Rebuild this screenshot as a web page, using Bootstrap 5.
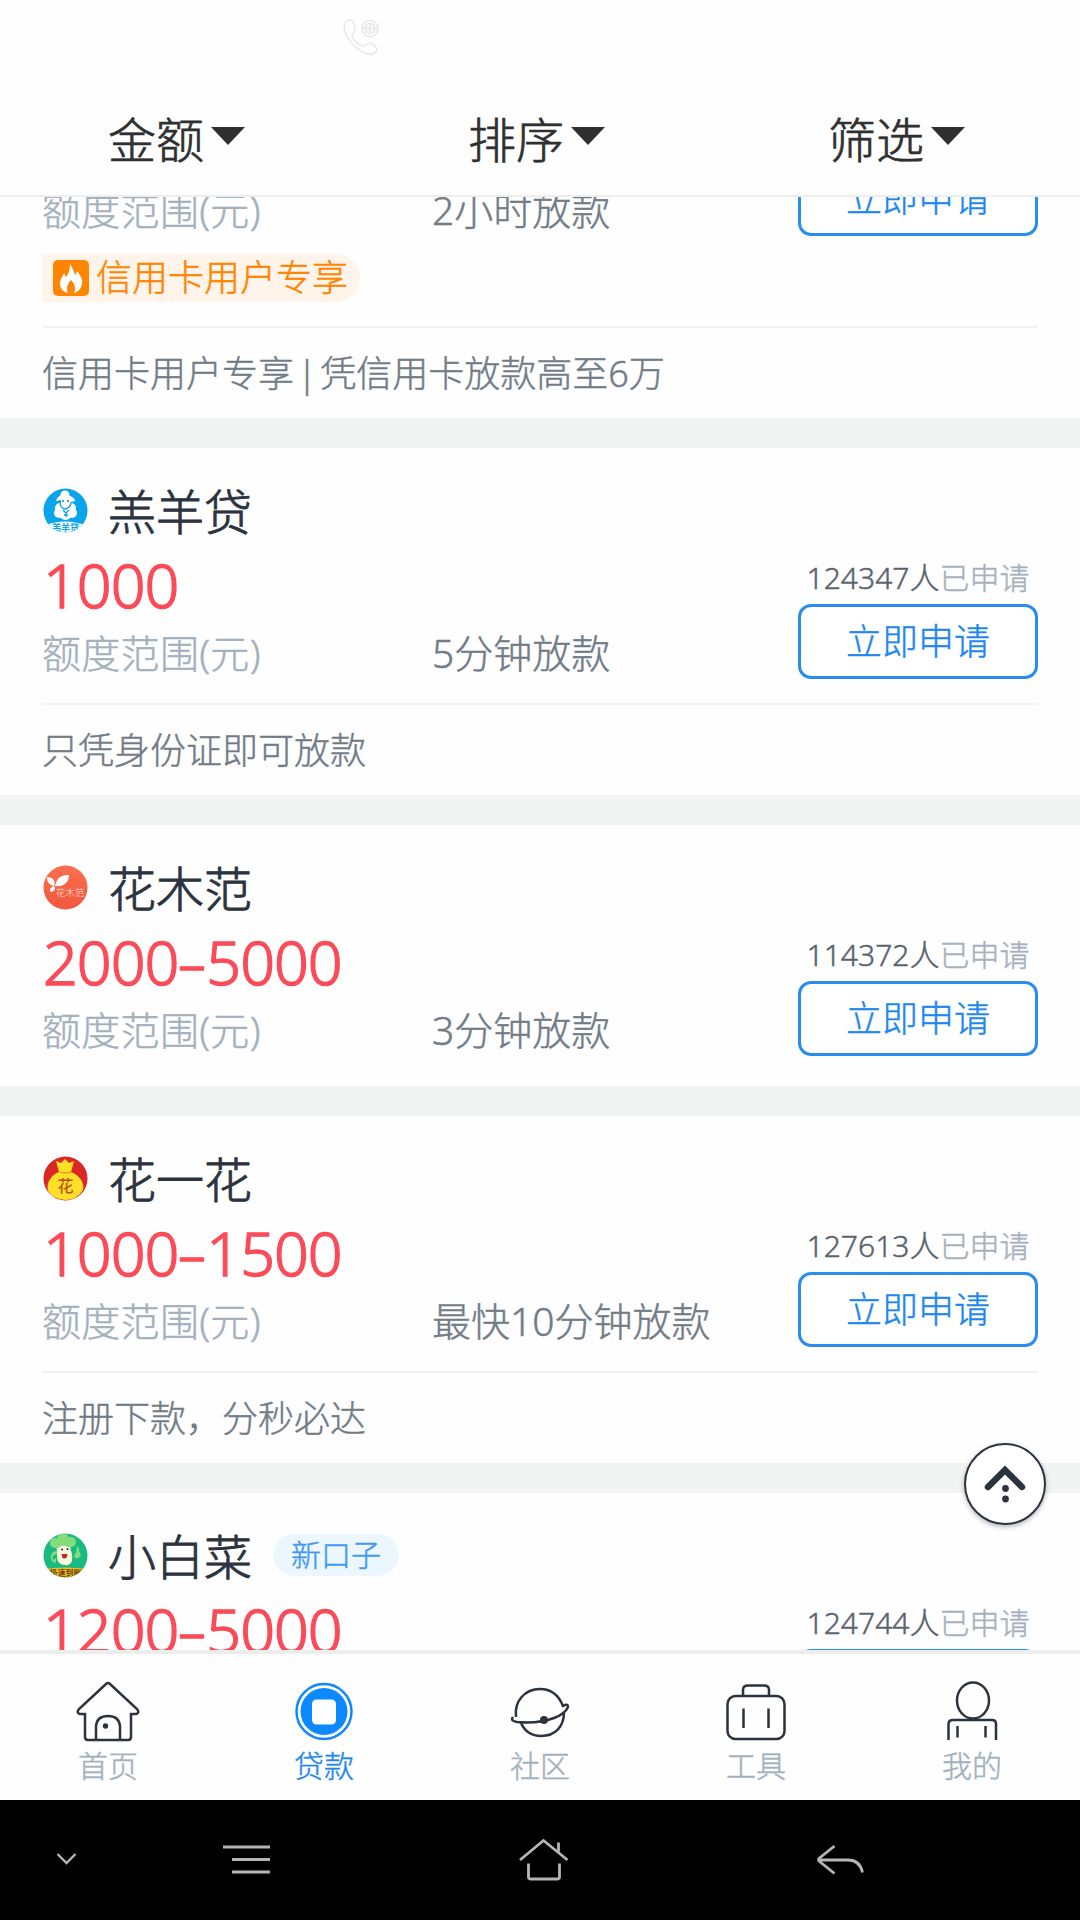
<!DOCTYPE html>
<html lang="zh-CN">
<head>
<meta charset="utf-8">
<meta name="viewport" content="width=device-width, initial-scale=1">
<title>贷款</title>
<link rel="stylesheet" href="https://cdn.jsdelivr.net/npm/bootstrap@5.3.0/dist/css/bootstrap.min.css">
<style>
  body { font-family: "Noto Sans", "Noto Sans CJK SC", sans-serif; font-weight: 300; color: #2b333e; -webkit-text-stroke: .45px currentColor; }
  .screen { width: 1080px; height: 1920px; background: #fefefe; }
  .status-bar { height: 82px; padding: 18px 0 0 341px; }
  .filter-bar { height: 115px; border-bottom: 2px solid #eceeef; font-size: 48px; color: #303030; -webkit-text-stroke-width: .7px; }
  .filter-bar .filter-item { padding-right: 7px; padding-top: 2px; gap: 7px; line-height: 1; }
  .filter-caret { width: 34px; height: 18px; margin-top: -8px; }
  .loan-list { height: 1453px; }
  .loan { padding: 0 42px; border-bottom: 30px solid #f2f4f3; }
  .loan-head { height: 97px; padding-top: 30px; }
  .loan-logo { width: 45px; height: 45px; margin: -2px 20px 0 1px; }
  .loan-logo text { -webkit-text-stroke-width: 0; }
  .loan-name { font-size: 48px; line-height: 66px; padding-top: 1px; -webkit-text-stroke-width: .9px; }
  .new-tag { margin: -3px 0 0 21px; height: 42px; padding: 0 18px; font-size: 30px; line-height: 41px; background: #ecf7fd; color: #4398f2; }
  .col-amount { width: 390px; }
  .amount { font-size: 61px; line-height: 79px; height: 82px; color: #fb4b59; padding-left: 1px; letter-spacing: -1px; -webkit-text-stroke-width: 1.4px; }
  .amount i { display: inline-block; font-style: normal; transform: scaleX(1.5); width: 28px; text-align: center; letter-spacing: 0; }
  .amount-label, .speed { font-size: 39px; line-height: 52px; height: 52px; }
  .amount-label { color: #a3b0bd; letter-spacing: .3px; }
  .speed { color: #717c87; }
  .col-apply { width: 240px; }
  .applied { font-size: 30px; line-height: 53px; height: 53px; color: #59636e; }
  .applied span { color: #a6b1be; }
  .btn-apply, .btn-apply:hover { height: 75px; border: 3px solid #2a8dec; border-radius: 13px; color: #1e87f0; font-size: 36px; line-height: 70px; font-weight: 300; background: #fff; }
  .desc { margin-top: 24px; height: 92px; border-top: 2px solid #f0f1f1; font-size: 36px; line-height: 92px; color: #717c87; word-spacing: -6px; }
  .no-desc { padding-bottom: 30px; }
  .loan-cut { height: 251px; }
  .partial .applied { margin-top: 6px; }
  .hot-tag { width: 318px; height: 48px; margin-top: 18px; padding-left: 11px; background: #fef4ea; border-radius: 0 24px 24px 0; color: #ff8400; font-size: 36px; line-height: 48px; gap: 7px; }
  .tab-bar { height: 150px; border-top: 4px solid #eceeee; background: #fefefe; font-size: 30px; color: #a3b0bd; }
  .tab-bar .tab { width: 216px; padding-top: 26px; line-height: 43px; }
  .tab svg { width: 64px; height: 64px; fill: none; stroke: #2b333e; stroke-width: 2.5; }
  .tab.on { color: #1e87f0; }
  .to-top { right: 34px; top: 1443px; width: 82px; height: 82px; background: #fff; border: 2px solid #2b333e; box-shadow: 0 2px 5px rgba(40,50,70,.35); }
  .sys-nav { height: 120px; background: #000; }
  .sys-nav svg { width: 60px; height: 60px; fill: none; stroke: #b5b5b5; stroke-width: 2.8; }
  .sys-nav .n1 { margin-left: 37px; } .sys-nav .n2 { margin-left: 120px; }
  .sys-nav .n3 { margin-left: 237px; } .sys-nav .n4 { margin-left: 236px; }
</style>
</head>
<body class="m-0">
<div class="screen position-relative overflow-hidden d-flex flex-column">
  <div class="status-bar">
    <svg class="d-block" width="40" height="40" fill="none" stroke="#e6e6e6" stroke-width="1.4">
      <path d="M3 8C4 4 7 2 10 2C13 3 14 9 14 12C14 15 11 15 11 18C12 22 18 27 22 28C25 28 26 25 29 25C32 26 36 29 36 32C35 35 31 37 27 36C16 33 3 20 3 8Z"/>
      <circle cx="29" cy="10.500" r="8"/><circle cx="29" cy="10.500" r="5"/><path d="M24 10.500H34M29 5V16M21 10h3M34 10h3"/>
    </svg>
  </div>
  <div class="filter-bar d-flex flex-shrink-0">
    <div class="filter-item col-4 d-flex align-items-center justify-content-center">金额<svg class="filter-caret"><path d="M0 0H34L17 18Z" fill="#303030"/></svg></div>
    <div class="filter-item col-4 d-flex align-items-center justify-content-center">排序<svg class="filter-caret"><path d="M0 0H34L17 18Z" fill="#303030"/></svg></div>
    <div class="filter-item col-4 d-flex align-items-center justify-content-center">筛选<svg class="filter-caret"><path d="M0 0H34L17 18Z" fill="#303030"/></svg></div>
  </div>

  <main class="loan-list overflow-hidden flex-shrink-0">
    <section class="loan loan-cut overflow-hidden d-flex flex-column justify-content-end">
      <div class="d-flex align-items-end">
        <div class="col-amount"><div class="amount-label">额度范围(元)</div></div>
        <div class="speed flex-grow-1">2小时放款</div>
        <div class="col-apply"><button class="btn btn-apply w-100 p-0 d-block">立即申请</button></div>
      </div>
      <div class="hot-tag d-flex align-items-center flex-shrink-0">
        <svg width="36" height="36"><rect width="36" height="36" rx="5" fill="#ff8400"/><path d="M17 4C20 9 21 11 22 15C23 14 24 12 24 11C28 16 30 20 29 24C28 29 25 32 21 33C23 29 22 24 18 20C14 24 13 29 15 33C10 32 7 28 7 24C7 19 10 16 11 13C12 15 12 16 13 17C16 13 17 9 17 4Z" fill="#fff"/></svg>信用卡用户专享
      </div>
      <div class="desc flex-shrink-0">信用卡用户专享 | 凭信用卡放款高至6万</div>
    </section>

    <section class="loan">
      <div class="loan-head d-flex align-items-center">
        <svg class="loan-logo" viewBox="0 0 45 45"><defs><clipPath id="round"><circle cx="22.500" cy="22.500" r="22"/></clipPath></defs>
          <g clip-path="url(#round)"><rect width="45" height="45" fill="#0aa4ea"/><path d="M0 45V38Q22 29 45 38V45Z" fill="#f4fbff"/>
          <g fill="#fff"><circle cx="17" cy="20" r="5"/><circle cx="28" cy="20" r="5"/><circle cx="16" cy="25" r="5"/><circle cx="29" cy="25" r="5"/><circle cx="22.500" cy="26" r="6"/><circle cx="22" cy="7" r="4.500"/><path d="M13 13Q14 9 18 7Q23 4 27 8Q32 10 32 13L28 14V19Q23 26 18 19V12Z"/></g>
          <g fill="none" stroke="#0aa4ea" stroke-width="1.300"><path d="M17 14Q17 20 22 21Q28 20 28 14M20 22L23 25L26 22M23 25V29M21 27H25"/></g><circle cx="20" cy="13" r="1" fill="#0a7fc0"/><circle cx="25" cy="13" r="1" fill="#0a7fc0"/>
          <text x="22.500" y="43" text-anchor="middle" font-size="9" font-weight="700" fill="#0aa4ea">羔羊贷</text></g></svg>
        <div class="loan-name">羔羊贷</div>
      </div>
      <div class="d-flex align-items-end">
        <div class="col-amount"><div class="amount">1000</div><div class="amount-label">额度范围(元)</div></div>
        <div class="speed flex-grow-1">5分钟放款</div>
        <div class="col-apply text-center"><div class="applied">124347人<span>已申请</span></div><button class="btn btn-apply w-100 p-0 d-block">立即申请</button></div>
      </div>
      <div class="desc">只凭身份证即可放款</div>
    </section>

    <section class="loan no-desc">
      <div class="loan-head d-flex align-items-center">
        <svg class="loan-logo" viewBox="0 0 45 45"><defs><linearGradient id="coral" x2="0" y2="1"><stop stop-color="#fc6f4d"/><stop offset="1" stop-color="#f1573f"/></linearGradient></defs><circle cx="22.500" cy="22.500" r="22" fill="url(#coral)"/>
          <path d="M12 21C14 12 19 10 26 10C26 18 20 22 12 21ZM11 21C4 19 4 15 4 12C10 12 13 16 11 21ZM11 21C13 23 12 26 8 27C6 26 7 22 11 21Z" fill="#fff"/>
          <text x="27" y="31" text-anchor="middle" font-size="9.500" fill="#ffe2d9">花木范</text></svg>
        <div class="loan-name">花木范</div>
      </div>
      <div class="d-flex align-items-end">
        <div class="col-amount"><div class="amount">2000<i>-</i>5000</div><div class="amount-label">额度范围(元)</div></div>
        <div class="speed flex-grow-1">3分钟放款</div>
        <div class="col-apply text-center"><div class="applied">114372人<span>已申请</span></div><button class="btn btn-apply w-100 p-0 d-block">立即申请</button></div>
      </div>
    </section>

    <section class="loan">
      <div class="loan-head d-flex align-items-center">
        <svg class="loan-logo" viewBox="0 0 45 45"><circle cx="22.500" cy="22.500" r="22" fill="#da2825"/>
          <path d="M16 16L13 5L18 7L22 3L26 7L31 5L28 16C37 19 42 28 40 34Q34 44 22 44Q10 43 5 35C3 27 8 19 16 16Z" fill="#ffe029"/><path d="M17 16Q22 18 28 16" stroke="#d99a12" stroke-width="1.300" fill="none"/>
          <text x="22.500" y="36" text-anchor="middle" font-size="16" font-weight="500" fill="#b8541b">花</text></svg>
        <div class="loan-name">花一花</div>
      </div>
      <div class="d-flex align-items-end">
        <div class="col-amount"><div class="amount">1000<i>-</i>1500</div><div class="amount-label">额度范围(元)</div></div>
        <div class="speed flex-grow-1">最快10分钟放款</div>
        <div class="col-apply text-center"><div class="applied">127613人<span>已申请</span></div><button class="btn btn-apply w-100 p-0 d-block">立即申请</button></div>
      </div>
      <div class="desc">注册下款，分秒必达</div>
    </section>

    <section class="loan">
      <div class="loan-head d-flex align-items-center">
        <svg class="loan-logo" viewBox="0 0 45 45"><g clip-path="url(#round)"><rect width="45" height="45" fill="#19ba82"/>
          <g fill="#83dc79"><circle cx="12" cy="10" r="5"/><circle cx="20" cy="6" r="6"/><circle cx="28" cy="9" r="5"/><path d="M11 10H30L27 18H14ZM31 23Q34 19 34 14Q36 12 36 18L38 22Q36 26 32 25ZM14 21Q8 22 10 27L13 25V30Q7 29 8 22Q10 18 14 18Z"/></g>
          <path d="M14 16Q20 9 27 16Q30 20 29 28Q27 33 22 32Q15 32 14 25Z" fill="#f4fbd9"/><circle cx="18.500" cy="16.500" r="2.200" fill="#fff"/><circle cx="25" cy="16" r="2.200" fill="#fff"/><circle cx="19" cy="16.500" r="1" fill="#222"/><circle cx="24.500" cy="16" r="1" fill="#222"/><path d="M18.500 21H24.500Q24 27 19.500 25Z" fill="#c9252b"/>
          <path d="M0 36Q22 33 45 36V45H0Z" fill="#efbd25"/><text x="22.500" y="43" text-anchor="middle" font-size="8" font-weight="700" fill="#6b4210">极速到账</text></g></svg>
        <div class="loan-name">小白菜</div><div class="new-tag rounded-pill">新口子</div>
      </div>
      <div class="partial d-flex align-items-start">
        <div class="col-amount"><div class="amount">1200<i>-</i>5000</div></div>
        <div class="ms-auto col-apply text-center"><div class="applied">124744人<span>已申请</span></div><div class="btn-apply"></div></div>
      </div>
    </section>
  </main>

  <nav class="tab-bar d-flex flex-shrink-0">
    <div class="tab d-flex flex-column align-items-center"><svg viewBox="0 0 64 64"><path d="M30 4Q32 2 34 4L61 29Q64 33 60 34H55V57Q55 60 52 60H12Q9 60 9 57V34H4Q0 33 3 29ZM20 60V46Q21 36 32 36Q43 36 44 46V60"/><circle cx="29.500" cy="46" r="2.700" fill="#2b333e" stroke="none"/></svg>首页</div>
    <div class="tab on d-flex flex-column align-items-center"><svg viewBox="0 0 64 64"><circle cx="32" cy="31.500" r="27.500" stroke="#1187fb"/><circle cx="32" cy="31.500" r="23.500" fill="#0d89ff" stroke="none"/><rect x="20" y="19.500" width="24" height="25" rx="4.500" fill="#fff" stroke="none"/></svg>贷款</div>
    <div class="tab d-flex flex-column align-items-center"><svg viewBox="0 0 64 64"><path d="M8 37C6 21 17 9 32 9C44 9 51 16 55 26Q60 23 60 27Q57 34 46 38Q30 44 9 42Q2 41 5 37M13 43Q19 56 33 56C47 56 56 47 56 32"/><circle cx="36" cy="40" r="4" fill="#2b333e" stroke="none"/></svg>社区</div>
    <div class="tab d-flex flex-column align-items-center"><svg viewBox="0 0 64 64"><rect x="3.500" y="16" width="57" height="43" rx="8"/><path d="M19 16V10Q19 5.500 24 5.500H40Q45 5.500 45 10V16M19.500 28.500V48M44.500 28.500V48"/></svg>工具</div>
    <div class="tab d-flex flex-column align-items-center"><svg viewBox="0 0 64 64"><ellipse cx="33" cy="20.500" rx="16" ry="18"/><path d="M8.500 60V44Q8.500 40 13 40H52Q56 40 56 44V60M17.500 46V57.500M45.500 46V57.500"/></svg>我的</div>
  </nav>

  <div class="sys-nav d-flex align-items-center flex-shrink-0">
    <svg class="n1" viewBox="0 0 60 60"><path d="M20.500 24L29.500 33L38.500 24" stroke-width="2.300"/></svg>
    <svg class="n2" viewBox="0 0 60 60"><path d="M6 17H53M15 29.500H53M15 42H53" stroke-width="3"/></svg>
    <svg class="n3" viewBox="0 0 60 60"><path d="M6 30L29.500 10.500L53.500 30M44.500 12.500V22M14.500 33.500V47Q14.500 49 17 49H43Q45.500 49 45.500 47V33.500"/></svg>
    <svg class="n4" viewBox="0 0 60 60"><path d="M24.500 16L9 28.500Q8 30 9 31L24.500 43.500M9 30H38Q50 30 52.500 42.500"/></svg>
  </div>

  <div class="to-top position-absolute rounded-circle">
    <svg class="d-block" width="78" height="78"><path d="M22 42L39 25L56 42" fill="none" stroke="#2b333e" stroke-width="6.500" stroke-linecap="round"/><circle cx="39.500" cy="43.500" r="3.400" fill="#2b333e"/><circle cx="39.500" cy="54" r="3.400" fill="#2b333e"/></svg>
  </div>
</div>
<script src="https://cdn.jsdelivr.net/npm/bootstrap@5.3.0/dist/js/bootstrap.bundle.min.js"></script>
</body>
</html>
